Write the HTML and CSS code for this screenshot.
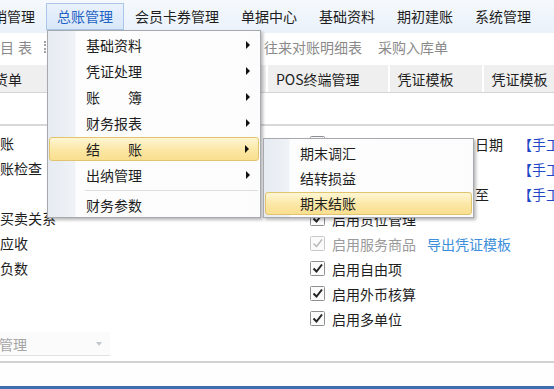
FILE: index.html
```html
<!DOCTYPE html>
<html lang="zh-CN">
<head>
<meta charset="UTF-8">
<meta name="viewport" content="width=device-width, initial-scale=1.0">
<title>总账管理</title>
<link rel="stylesheet" href="styles.css">
</head>
<body>
<div class="app">
    <nav class="menubar">
        <span class="menu-item first">营销管理</span>
        <span class="menu-item active">总账管理</span>
        <span class="menu-item">会员卡券管理</span>
        <span class="menu-item">单据中心</span>
        <span class="menu-item">基础资料</span>
        <span class="menu-item">期初建账</span>
        <span class="menu-item">系统管理</span>
    </nav>

    <div class="toolbar">
        <span class="tool cut">科目表</span>
        <span class="tool-sep"></span>
        <span class="tool">凭证录入</span>
        <span class="tool">总分类账</span>
        <span class="tool">明细账</span>
        <span class="tool">往来对账明细表</span>
        <span class="tool">采购入库单</span>
    </div>

    <div class="tabs">
        <span class="tab first">进货单</span>
        <span class="tab">凭证录入</span>
        <span class="tab">科目余额明细</span>
        <span class="tab">POS终端管理</span>
        <span class="tab">凭证模板</span>
        <span class="tab">凭证模板</span>
    </div>

    <div class="blank"></div>

    <div class="content">
        <div class="col-left">
            <div class="row">结账</div>
            <div class="row">对账检查</div>
            <div class="row"></div>
            <div class="row">按买卖关系</div>
            <div class="row">冲应收</div>
            <div class="row">为负数</div>
        </div>
        <div class="col-right">
            <div class="opt">
                <svg class="chk" viewBox="0 0 15 15"><rect x="0.5" y="0.5" width="14" height="14" rx="1"/><path d="M3.5 7.5 L6.5 10.5 L12 3.5"/></svg>
                <span class="lbl">启用凭证制单日期</span>
                <span class="mid">日期</span>
                <span class="hand">【手工录入】</span>
            </div>
            <div class="opt">
                <svg class="chk" viewBox="0 0 15 15"><rect x="0.5" y="0.5" width="14" height="14" rx="1"/><path d="M3.5 7.5 L6.5 10.5 L12 3.5"/></svg>
                <span class="lbl">启用凭证审核</span>
                <span class="mid"></span>
                <span class="hand">【手工录入】</span>
            </div>
            <div class="opt">
                <svg class="chk" viewBox="0 0 15 15"><rect x="0.5" y="0.5" width="14" height="14" rx="1"/><path d="M3.5 7.5 L6.5 10.5 L12 3.5"/></svg>
                <span class="lbl">启用会计期间</span>
                <span class="mid">至</span>
                <span class="hand">【手工录入】</span>
            </div>
            <div class="opt">
                <svg class="chk" viewBox="0 0 15 15"><rect x="0.5" y="0.5" width="14" height="14" rx="1"/><path d="M3.5 7.5 L6.5 10.5 L12 3.5"/></svg>
                <span class="lbl">启用货位管理</span>
            </div>
            <div class="opt off">
                <svg class="chk" viewBox="0 0 15 15"><rect x="0.5" y="0.5" width="14" height="14" rx="1"/><path d="M3.5 7.5 L6.5 10.5 L12 3.5"/></svg>
                <span class="lbl wide">启用服务商品<span class="export">导出凭证模板</span></span>
            </div>
            <div class="opt">
                <svg class="chk" viewBox="0 0 15 15"><rect x="0.5" y="0.5" width="14" height="14" rx="1"/><path d="M3.5 7.5 L6.5 10.5 L12 3.5"/></svg>
                <span class="lbl">启用自由项</span>
            </div>
            <div class="opt">
                <svg class="chk" viewBox="0 0 15 15"><rect x="0.5" y="0.5" width="14" height="14" rx="1"/><path d="M3.5 7.5 L6.5 10.5 L12 3.5"/></svg>
                <span class="lbl">启用外币核算</span>
            </div>
            <div class="opt">
                <svg class="chk" viewBox="0 0 15 15"><rect x="0.5" y="0.5" width="14" height="14" rx="1"/><path d="M3.5 7.5 L6.5 10.5 L12 3.5"/></svg>
                <span class="lbl">启用多单位</span>
            </div>
        </div>
    </div>

    <div class="picker"><span>部门管理</span><i class="caret"></i></div>

    <div class="divider"></div>
    <div class="status"></div>
    <div class="bluebar"></div>

    <!-- 总账管理 下拉菜单 -->
    <div class="dropdown">
        <div class="dd-item">基础资料<i class="arr"></i></div>
        <div class="dd-item">凭证处理<i class="arr"></i></div>
        <div class="dd-item">账　　簿<i class="arr"></i></div>
        <div class="dd-item">财务报表<i class="arr"></i></div>
        <div class="dd-item hot">结　　账<i class="arr"></i></div>
        <div class="dd-item">出纳管理<i class="arr"></i></div>
        <div class="dd-sep"></div>
        <div class="dd-item last">财务参数</div>
    </div>

    <!-- 结账 子菜单 -->
    <div class="submenu">
        <div class="sub-item">期末调汇</div>
        <div class="sub-item">结转损益</div>
        <div class="sub-item hot">期末结账</div>
    </div>
</div>
</body>
</html>
```

FILE: styles.css
```css
* {
    box-sizing: border-box;
}

body {
    margin: 0;
    width: 554px;
    height: 389px;
    overflow: hidden;
    background: #fff;
    color: #1e1e1e;
    font-family: "Noto Sans CJK SC", "Microsoft YaHei", sans-serif;
    font-size: 14px;
}

.app {
    position: relative;
    height: 389px;
    overflow: hidden;
    display: flex;
    flex-direction: column;
}

/* 菜单栏 */
.menubar {
    display: flex;
    flex: none;
    height: 33px;
    background: linear-gradient(#f5f9fd, #eaf1fa);
}

.menu-item {
    flex: none;
    margin-top: 3px;
    height: 27px;
    line-height: 25px;
    padding: 0 10px;
    border: 1px solid transparent;
    white-space: nowrap;
}

.menu-item.first {
    margin-left: -32px;
}

.menu-item.active {
    background: linear-gradient(#eaf2fc, #d8e7f8);
    border-color: #aac7ea;
    color: #1f62c4;
}

/* 快捷工具栏 */
.toolbar {
    display: flex;
    flex: none;
    align-items: center;
    gap: 16px;
    height: 27px;
    color: #8a8a8a;
    white-space: nowrap;
}

.tool {
    flex: none;
}

.tool.cut {
    margin-left: -18px;
    letter-spacing: 4px;
}

.tool-sep {
    flex: none;
    width: 1px;
    height: 12px;
    margin-left: -8px;
    border-left: 2px dotted #a0a0a0;
}

/* 页签 */
.tabs {
    display: flex;
    flex: none;
    gap: 2px;
    height: 28px;
    margin-top: 5px;
    border-bottom: 1px solid #d4d4d4;
}

.tab {
    flex: none;
    padding: 0 28px 0 8px;
    line-height: 28px;
    background: #efefef;
    white-space: nowrap;
}

.tab.first {
    margin-left: -28px;
}

.blank {
    flex: none;
    height: 33px;
    border-bottom: 2px solid #d8d8d8;
}

/* 参数内容 */
.content {
    flex: none;
    display: grid;
    grid-template-columns: 324px 1fr;
    margin-left: -14px;
    padding-top: 5px;
    height: 205px;
}

.row {
    height: 25px;
    line-height: 25px;
    white-space: nowrap;
}

.opt {
    display: flex;
    align-items: center;
    height: 25px;
    white-space: nowrap;
}

.chk {
    flex: none;
    width: 15px;
    height: 15px;
    margin-right: 7px;
}

.chk rect {
    fill: #fbfbfb;
    stroke: #8d8f92;
}

.chk path {
    fill: none;
    stroke: #222;
    stroke-width: 2;
}

.opt.off .chk rect {
    stroke: #c8c8c8;
}

.opt.off .chk path {
    stroke: #b5b5b5;
    stroke-width: 1.4;
}

.lbl {
    flex: none;
    width: 143px;
}

.lbl.wide {
    width: auto;
}

.opt.off .lbl {
    color: #9a9a9a;
}

.export {
    margin-left: 11px;
    color: #3d8edb;
}

.mid {
    flex: none;
    width: 43px;
}

.hand {
    flex: none;
    color: #1d47c8;
}

.picker {
    flex: none;
    display: flex;
    align-items: center;
    justify-content: space-between;
    width: 140px;
    height: 24px;
    margin: 1px 0 0 -30px;
    padding: 0 8px 0 1px;
    background: #fbfbfb;
    border-bottom: 1px solid #e2e2e2;
    color: #a5a5a5;
}

.caret {
    width: 0;
    height: 0;
    border-left: 3px solid transparent;
    border-right: 3px solid transparent;
    border-top: 4px solid #c3c7cf;
}

.divider {
    flex: none;
    height: 2px;
    margin-top: 5px;
    background: #d2d2d2;
}

.status {
    flex: 1;
    background: #fefefe;
}

.bluebar {
    flex: none;
    height: 3px;
    background: #3f6eb2;
}

/* 下拉菜单 */
.dropdown {
    position: absolute;
    left: 47px;
    top: 30px;
    width: 214px;
    padding-top: 1px;
    border: 1px solid #a6a9ae;
    background: linear-gradient(to right, #e6ebf2, #eff2f6 27px, #fdfdfd 28px, #fcfcfc);
    box-shadow: 2px 2px 3px rgba(0, 0, 0, 0.28);
}

.dd-item {
    display: flex;
    align-items: center;
    justify-content: space-between;
    height: 26px;
    padding: 0 10px 0 38px;
    white-space: nowrap;
}

.dd-item.last {
    height: 24px;
}

.hot {
    background: linear-gradient(#fef6d3, #fbe7a5 55%, #f9df8f);
    border: 1px solid #e3c46e;
    border-radius: 3px;
}

.dd-item.hot {
    height: 24px;
    margin: 1px 1px;
    padding: 0 9px 0 36px;
}

.arr {
    width: 0;
    height: 0;
    border-top: 4px solid transparent;
    border-bottom: 4px solid transparent;
    border-left: 4px solid #111;
}

.dd-sep {
    height: 5px;
    margin: 0 2px 0 37px;
    background: linear-gradient(#dedede, #dedede) 0 2px / 100% 1px no-repeat;
}

/* 子菜单 */
.submenu {
    position: absolute;
    left: 263px;
    top: 138px;
    width: 211px;
    padding: 2px 0 1px;
    border: 1px solid #a6a9ae;
    background: linear-gradient(to right, #e6ebf2, #eff2f6 25px, #fdfdfd 26px, #fcfcfc);
    box-shadow: 2px 2px 3px rgba(0, 0, 0, 0.28);
}

.sub-item {
    height: 25px;
    line-height: 25px;
    padding-left: 36px;
    white-space: nowrap;
}

.sub-item.hot {
    height: 23px;
    line-height: 21px;
    margin: 1px 1px;
    padding-left: 34px;
}
```
